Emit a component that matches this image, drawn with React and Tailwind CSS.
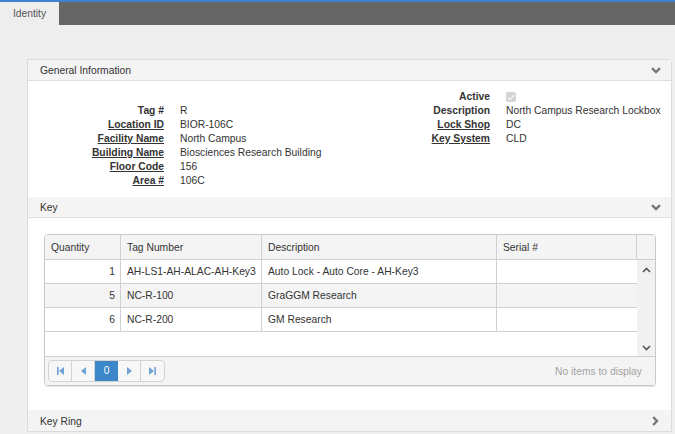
import React from "react";

const ChevDown = () => (
  <svg width="10" height="7" viewBox="0 0 10 7">
    <polyline points="1,1.2 5,5 9,1.2" fill="none" stroke="#777" strokeWidth="2.4" />
  </svg>
);
const ChevRight = () => (
  <svg width="7" height="10" viewBox="0 0 7 10">
    <polyline points="1.2,1 5,5 1.2,9" fill="none" stroke="#777" strokeWidth="2.4" />
  </svg>
);
const SmallUp = () => (
  <svg width="9" height="6" viewBox="0 0 9 6">
    <polyline points="1,5 4.5,1.5 8,5" fill="none" stroke="#555" strokeWidth="1.6" />
  </svg>
);
const SmallDown = () => (
  <svg width="9" height="6" viewBox="0 0 9 6">
    <polyline points="1,1 4.5,4.5 8,1" fill="none" stroke="#555" strokeWidth="1.6" />
  </svg>
);

const First = () => (
  <svg width="7" height="8" viewBox="0 0 7 8">
    <rect x="0" y="0" width="1.6" height="8" fill="#6fa3d8" />
    <polygon points="7,0 7,8 2,4" fill="#6fa3d8" />
  </svg>
);
const Prev = () => (
  <svg width="5" height="8" viewBox="0 0 5 8">
    <polygon points="5,0 5,8 0,4" fill="#6fa3d8" />
  </svg>
);
const Next = () => (
  <svg width="5" height="8" viewBox="0 0 5 8">
    <polygon points="0,0 0,8 5,4" fill="#6fa3d8" />
  </svg>
);
const Last = () => (
  <svg width="7" height="8" viewBox="0 0 7 8">
    <polygon points="0,0 0,8 5,4" fill="#6fa3d8" />
    <rect x="5.4" y="0" width="1.6" height="8" fill="#6fa3d8" />
  </svg>
);

function Header({ title, icon }) {
  return (
    <div className="h-[21px] bg-[#f4f4f4] border-b border-[#dedede] flex items-center justify-between pl-[12px] pr-[10px]">
      <span className="pt-[2px]">{title}</span>
      {icon}
    </div>
  );
}

function Row({ label, value, link, children }) {
  return (
    <div className="flex h-[14px] items-center">
      <div className={"font-bold text-right shrink-0 " + (link ? "underline underline-offset-[1px]" : "")} style={{ width: "var(--lw)" }}>
        {label}
      </div>
      <div className="ml-[16px] flex items-center">{children || value}</div>
    </div>
  );
}

export default function App() {
  const rows = [
    ["1", "AH-LS1-AH-ALAC-AH-Key3", "Auto Lock - Auto Core - AH-Key3", "bg-white"],
    ["5", "NC-R-100", "GraGGM Research", "bg-[#f4f4f4]"],
    ["6", "NC-R-200", "GM Research", "bg-white"],
  ];
  return (
    <div className="w-[675px] h-[434px] overflow-hidden bg-[#efefef] text-[10.3px] leading-[14px] text-[#333] font-['Liberation_Sans',Arial,sans-serif]">
      <div className="h-[2px] bg-[#3f7fcf]" />
      <div className="h-[23px] bg-[#666666] flex">
        <div className="w-[59px] bg-[#eeeeee] flex items-center justify-center text-[#555]">Identity</div>
      </div>

      <div className="ml-[27px] mt-[34px] w-[645px] border border-[#dcdcdc] rounded-tr-[4px] bg-white">
        <Header title="General Information" icon={<ChevDown />} />
        <div className="flex pt-[9px] pb-[9px]">
          <div className="w-[322px] flex flex-col" style={{ "--lw": "136px" }}>
            <div className="h-[14px]" />
            <Row label="Tag #" value="R" />
            <Row label="Location ID" value="BIOR-106C" link />
            <Row label="Facility Name" value="North Campus" link />
            <Row label="Building Name" value="Biosciences Research Building" link />
            <Row label="Floor Code" value="156" link />
            <Row label="Area #" value="106C" link />
          </div>
          <div className="flex flex-col" style={{ "--lw": "140px" }}>
            <Row label="Active">
              <div className="w-[10px] h-[10px] rounded-[2px] bg-[#d4d4d4] flex items-center justify-center">
                <svg width="8" height="7" viewBox="0 0 8 7">
                  <polyline points="1,3.5 3,5.5 7,1" fill="none" stroke="#f2f2f2" strokeWidth="1.4" />
                </svg>
              </div>
            </Row>
            <Row label="Description" value="North Campus Research Lockbox" />
            <Row label="Lock Shop" value="DC" link />
            <Row label="Key System" value="CLD" link />
          </div>
        </div>

        <Header title="Key" icon={<ChevDown />} />
        <div className="pt-[16px] pl-[16px] pr-[15px] pb-[24px]">
          <div className="border border-[#c8c8c8] rounded-[4px] shadow-[0_1px_1px_rgba(0,0,0,0.12)] overflow-hidden">
            <div className="flex h-[25px] bg-[#f4f4f4] border-b border-[#d0d0d0]">
              <div className="w-[76px] border-r border-[#d0d0d0] pl-[6px] pt-[1px] flex items-center">Quantity</div>
              <div className="w-[141px] border-r border-[#d0d0d0] pl-[6px] pt-[1px] flex items-center">Tag Number</div>
              <div className="w-[235px] border-r border-[#d0d0d0] pl-[6px] pt-[1px] flex items-center">Description</div>
              <div className="w-[140px] border-r border-[#d0d0d0] pl-[6px] pt-[1px] flex items-center">Serial #</div>
              <div className="flex-1" />
            </div>
            <div className="flex h-[97px] border-b border-[#d0d0d0]">
              <div className="w-[592px] flex flex-col">
                {rows.map((r) => (
                  <div key={r[1]} className={"flex h-[24px] border-b border-[#d0d0d0] " + r[3]}>
                    <div className="w-[76px] border-r border-[#d0d0d0] pr-[5px] pt-[1px] flex items-center justify-end">{r[0]}</div>
                    <div className="w-[141px] border-r border-[#d0d0d0] pl-[6px] pt-[1px] flex items-center">{r[1]}</div>
                    <div className="w-[235px] border-r border-[#d0d0d0] pl-[6px] pt-[1px] flex items-center">{r[2]}</div>
                    <div className="w-[140px] flex items-center" />
                  </div>
                ))}
              </div>
              <div className="flex-1 bg-[#f1f1f1] flex flex-col items-center justify-between pt-[7px] pb-[5px]">
                <SmallUp />
                <SmallDown />
              </div>
            </div>
            <div className="h-[28px] bg-[#f4f4f4] flex items-center justify-between pl-[3px] pr-[13px]">
              <div className="flex h-[22px] border border-[#d3d3d3] rounded-[4px] overflow-hidden bg-[#f7f7f7]">
                <div className="w-[23px] border-r border-[#d3d3d3] flex items-center justify-center"><First /></div>
                <div className="w-[23px] border-r border-[#d3d3d3] flex items-center justify-center"><Prev /></div>
                <div className="w-[23px] bg-[#3c87c8] text-white flex items-center justify-center">0</div>
                <div className="w-[23px] border-r border-[#d3d3d3] flex items-center justify-center"><Next /></div>
                <div className="w-[23px] flex items-center justify-center"><Last /></div>
              </div>
              <span className="text-[#a3a3a3] pt-[1px]">No items to display</span>
            </div>
          </div>
        </div>

        <div className="h-[21px] bg-[#f4f4f4] flex items-center justify-between pl-[12px] pr-[12px]">
          <span className="pt-[2px]">Key Ring</span>
          <ChevRight />
        </div>
      </div>
    </div>
  );
}
